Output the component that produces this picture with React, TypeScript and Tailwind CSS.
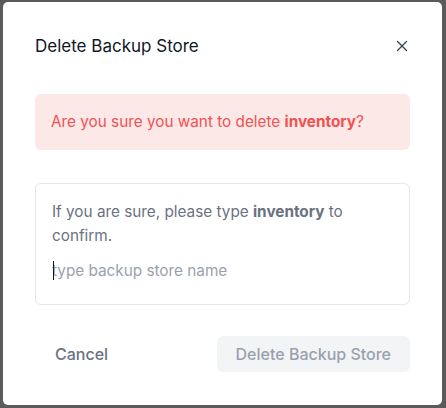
import { X } from "lucide-react";

export default function App() {
  return (
    <div
      className="w-[446px] h-[408px] bg-[#5b5b5b] pt-[2px] pl-[3px] pr-[4px] pb-[3px]"
      style={{ fontFamily: "Inter, 'Noto Sans', sans-serif" }}
    >
      <div className="h-full bg-white rounded-[5px] px-8 pt-8 pb-[33px] flex flex-col">
        <div className="flex items-center justify-between h-6">
          <h2 className="text-[17px] leading-6 text-gray-900">Delete Backup Store</h2>
          <button className="text-gray-700 -mr-[1px]">
            <X size={18} strokeWidth={1.75} />
          </button>
        </div>

        <div className="mt-9 rounded-md bg-[#fde8e8] px-4 py-4">
          <p className="text-[15.3px] leading-6 text-[#f05252]">
            Are you sure you want to delete <span className="font-bold">inventory</span>?
          </p>
        </div>

        <div className="mt-[33px] rounded-md border border-gray-200 px-4 pt-4 pb-5">
          <p className="text-[15.3px] leading-6 text-gray-500">
            If you are sure, please type <span className="font-bold">inventory</span> to confirm.
          </p>
          <div className="relative mt-2">
            <span className="absolute left-[1px] top-[5px] h-[19px] w-px bg-gray-900" />
            <input
              type="text"
              placeholder="type backup store name"
              className="h-7 w-full text-[15.3px] text-gray-900 placeholder:text-gray-400 outline-none"
            />
          </div>
        </div>

        <div className="mt-auto flex items-center justify-between">
          <button className="px-5 h-9 text-base font-medium text-gray-500">Cancel</button>
          <button
            disabled
            className="px-[19px] h-9 rounded-md bg-gray-100 text-base font-medium text-gray-400"
          >
            Delete Backup Store
          </button>
        </div>
      </div>
    </div>
  );
}
